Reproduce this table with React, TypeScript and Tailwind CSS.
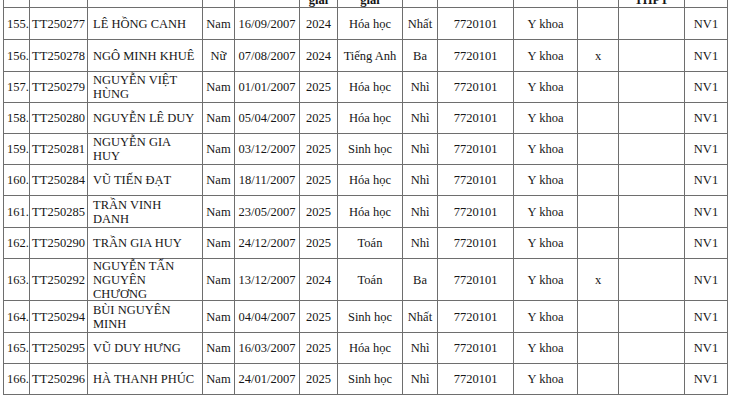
import React from 'react';

type Row = {
  stt: string;
  id: string;
  name: string;
  sex: string;
  dob: string;
  year: string;
  subject: string;
  prize: string;
  code: string;
  major: string;
  flag: string;
  h: string;
};

const rows: Row[] = [
  { stt: '155.', id: 'TT250277', name: 'LÊ HỒNG CANH', sex: 'Nam', dob: '16/09/2007', year: '2024', subject: 'Hóa học', prize: 'Nhất', code: '7720101', major: 'Y khoa', flag: '', h: 'h-[32px]' },
  { stt: '156.', id: 'TT250278', name: 'NGÔ MINH KHUÊ', sex: 'Nữ', dob: '07/08/2007', year: '2024', subject: 'Tiếng Anh', prize: 'Ba', code: '7720101', major: 'Y khoa', flag: 'x', h: 'h-[32px]' },
  { stt: '157.', id: 'TT250279', name: 'NGUYỄN VIỆT HÙNG', sex: 'Nam', dob: '01/01/2007', year: '2025', subject: 'Hóa học', prize: 'Nhì', code: '7720101', major: 'Y khoa', flag: '', h: 'h-[31px]' },
  { stt: '158.', id: 'TT250280', name: 'NGUYỄN LÊ DUY', sex: 'Nam', dob: '05/04/2007', year: '2025', subject: 'Hóa học', prize: 'Nhì', code: '7720101', major: 'Y khoa', flag: '', h: 'h-[31px]' },
  { stt: '159.', id: 'TT250281', name: 'NGUYỄN GIA HUY', sex: 'Nam', dob: '03/12/2007', year: '2025', subject: 'Sinh học', prize: 'Nhì', code: '7720101', major: 'Y khoa', flag: '', h: 'h-[31px]' },
  { stt: '160.', id: 'TT250284', name: 'VŨ TIẾN ĐẠT', sex: 'Nam', dob: '18/11/2007', year: '2025', subject: 'Hóa học', prize: 'Nhì', code: '7720101', major: 'Y khoa', flag: '', h: 'h-[31px]' },
  { stt: '161.', id: 'TT250285', name: 'TRẦN VINH DANH', sex: 'Nam', dob: '23/05/2007', year: '2025', subject: 'Hóa học', prize: 'Nhì', code: '7720101', major: 'Y khoa', flag: '', h: 'h-[32px]' },
  { stt: '162.', id: 'TT250290', name: 'TRẦN GIA HUY', sex: 'Nam', dob: '24/12/2007', year: '2025', subject: 'Toán', prize: 'Nhì', code: '7720101', major: 'Y khoa', flag: '', h: 'h-[31px]' },
  { stt: '163.', id: 'TT250292', name: 'NGUYỄN TẤN NGUYÊN CHƯƠNG', sex: 'Nam', dob: '13/12/2007', year: '2024', subject: 'Toán', prize: 'Ba', code: '7720101', major: 'Y khoa', flag: 'x', h: 'h-[42px]' },
  { stt: '164.', id: 'TT250294', name: 'BÙI NGUYÊN MINH', sex: 'Nam', dob: '04/04/2007', year: '2025', subject: 'Sinh học', prize: 'Nhất', code: '7720101', major: 'Y khoa', flag: '', h: 'h-[32px]' },
  { stt: '165.', id: 'TT250295', name: 'VŨ DUY HƯNG', sex: 'Nam', dob: '16/03/2007', year: '2025', subject: 'Hóa học', prize: 'Nhì', code: '7720101', major: 'Y khoa', flag: '', h: 'h-[31px]' },
  { stt: '166.', id: 'TT250296', name: 'HÀ THANH PHÚC', sex: 'Nam', dob: '24/01/2007', year: '2025', subject: 'Sinh học', prize: 'Nhì', code: '7720101', major: 'Y khoa', flag: '', h: 'h-[31px]' },
];

const cell = 'border-r border-b border-[#6e6e6e] flex items-center';
const center = `${cell} justify-center text-center`;

// last visible line of the header (the rest is cut off above the frame)
const header = ['', '', '', '', '', 'giải', 'giải', '', '', '', '', 'THPT', ''];

export default function App() {
  return (
    <div
      className="w-[730px] h-[400px] bg-white text-[#161616] text-[12.5px] leading-[14px] overflow-hidden"
      style={{ fontFamily: '"Liberation Serif", "Times New Roman", serif' }}
    >
      <div className="ml-[3px] w-[725px] border-l border-[#6e6e6e] grid grid-cols-[26px_58px_115px_32px_65px_38px_65px_35px_76px_64px_41px_66px_43px]">
        {header.map((t, i) => (
          <div key={`h${i}`} className="h-[8px] border-r border-b border-[#6e6e6e] overflow-hidden flex items-end justify-center">
            <span className="font-bold whitespace-nowrap">{t}</span>
          </div>
        ))}

        {rows.map((r) => (
          <React.Fragment key={r.stt}>
            <div className={`${cell} ${r.h} pl-[3px] whitespace-nowrap overflow-visible`}>{r.stt}</div>
            <div className={`${center} ${r.h} whitespace-nowrap`}>{r.id}</div>
            <div className={`${cell} ${r.h} pl-[5px] pr-[6px]`}>{r.name}</div>
            <div className={`${center} ${r.h}`}>{r.sex}</div>
            <div className={`${center} ${r.h} whitespace-nowrap`}>{r.dob}</div>
            <div className={`${center} ${r.h}`}>{r.year}</div>
            <div className={`${center} ${r.h} whitespace-nowrap`}>{r.subject}</div>
            <div className={`${center} ${r.h}`}>{r.prize}</div>
            <div className={`${center} ${r.h}`}>{r.code}</div>
            <div className={`${center} ${r.h}`}>{r.major}</div>
            <div className={`${center} ${r.h}`}>{r.flag}</div>
            <div className={`${center} ${r.h}`}></div>
            <div className={`${center} ${r.h}`}>NV1</div>
          </React.Fragment>
        ))}
      </div>
    </div>
  );
}
